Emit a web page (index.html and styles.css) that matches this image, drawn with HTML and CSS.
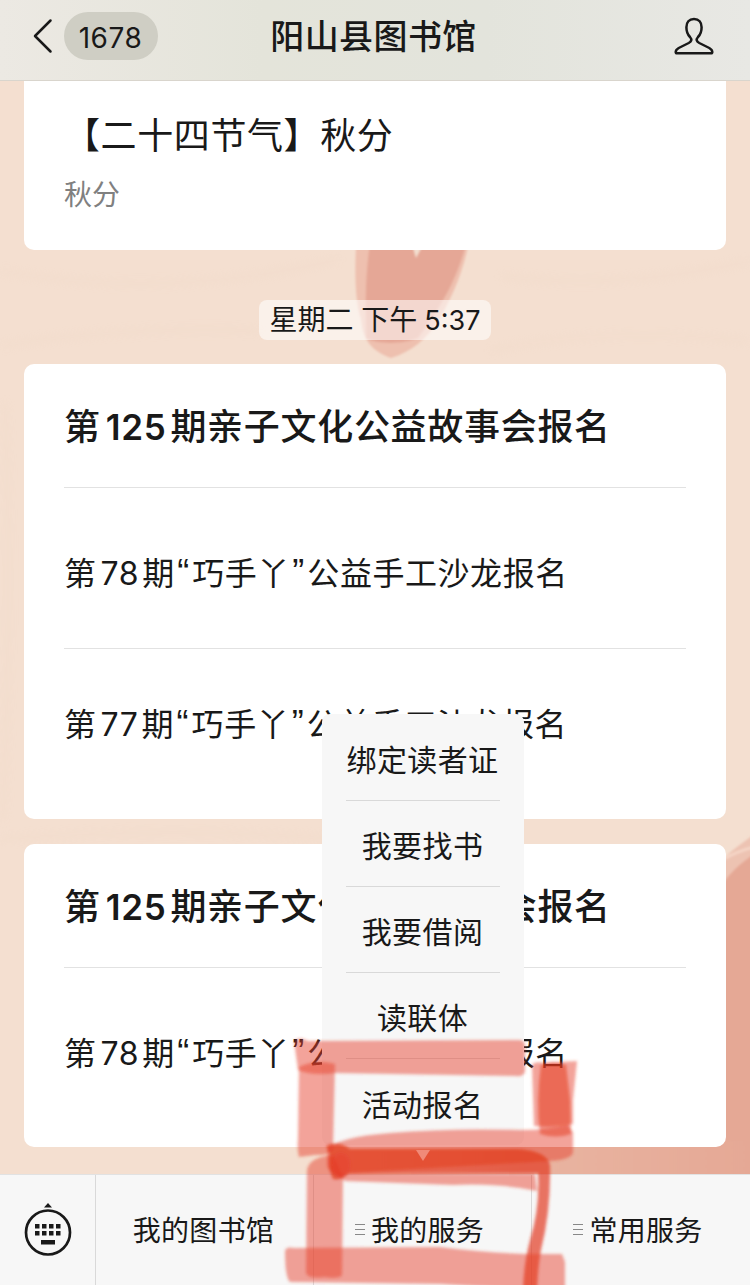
FILE: index.html
```
<!DOCTYPE html>
<html lang="zh-CN">
<head>
	<meta charset="utf-8">
	<title>阳山县图书馆</title>
	<link rel="stylesheet" href="styles.css">
</head>
<body>
	<header>
		<div class="back">
			<svg width="22" height="36" viewBox="0 0 22 36"><path d="M18.500 2.500L3 18L18.500 33.500"/></svg>
			<span class="unread">1678</span>
		</div>
		<h1>阳山县图书馆</h1>
		<svg class="profile" width="42" height="40" viewBox="0 0 42 40"><path d="M21 3c-5 0-7.600 3.700-7.600 8.200 0 4 1.100 7.300 3.600 9.800 2.200 2.500 1.500 4.500-1.300 6L5.700 32C3.200 33.500 2.700 34.500 2.700 36c0 .9.500 1.300 1.400 1.300h33.800c.9 0 1.400-.4 1.400-1.300 0-1.500-.5-2.500-3-4L26.300 27c-2.800-1.500-3.500-3.500-1.300-6 2.500-2.500 3.600-5.800 3.600-9.800C28.600 6.700 26 3 21 3z"/></svg>
	</header>
	<main>
		<svg class="wallpaper" width="750" height="1094" viewBox="0 80 750 1094">
			<defs>
				<filter id="soft"><feGaussianBlur stdDeviation="1"/></filter>
				<filter id="softer" x="-30%" width="160%"><feGaussianBlur stdDeviation="5"/></filter>
				<linearGradient id="blush">
					<stop offset="0" stop-color="#eec7b4" stop-opacity="0"/>
					<stop offset=".45" stop-color="#e9b5a2"/>
					<stop offset="1" stop-color="#e5a895"/>
				</linearGradient>
			</defs>
			<g fill="none" stroke="#ecd3c1" stroke-width="4" opacity=".3" filter="url(#softer)">
				<path d="M0 270Q170 300 340 258M0 345Q120 325 260 330M500 275Q620 290 750 260M490 350Q600 325 750 340M5 400Q12 600 3 820M0 838Q180 825 330 838"/>
			</g>
			<g filter="url(#soft)">
				<path d="M357 230C354 270 355 300 361 318C363 340 372 350 391 357C413 350 426 338 438 320C450 300 464 272 470 235Z" fill="#eec0af"/>
				<path d="M371 235C364 280 366 310 366 337C378 344 405 343 418 337C438 310 458 280 468 235Z" fill="#e5a796"/>
				<path d="M411 240h14l-9 17z" fill="#f3decf"/>
				<path d="M757 830C744 843 733 846 720 862V960H757Z" fill="#edc3b2"/>
				<path d="M757 851C742 861 730 870 718 890V1180H757Z" fill="#e5a895"/>
				<path d="M724 858Q738 850 754 846" stroke="#f5d5c6" stroke-width="3" fill="none"/>
				<path d="M320 1140H757V1180H320Z" fill="url(#blush)"/>
			</g>
		</svg>
		<article class="notice">
			<h3>【二十四节气】秋分</h3>
			<p>秋分</p>
		</article>
		<time>星期二 下午<b>5:37</b></time>
		<article>
			<h2>第<b>125</b>期亲子文化公益故事会报名</h2>
			<p class="row first">第<b>78</b>期<i>“</i>巧手丫<i>”</i>公益手工沙龙报名</p>
			<p class="row last">第<b>77</b>期<i>“</i>巧手丫<i>”</i>公益手工沙龙报名</p>
		</article>
		<article>
			<h2>第<b>125</b>期亲子文化公益故事会报名</h2>
			<p class="row">第<b>78</b>期<i>“</i>巧手丫<i>”</i>公益手工沙龙报名</p>
		</article>
	</main>
	<footer>
		<div class="keyboard">
			<svg width="50" height="56" viewBox="0 0 50 56">
				<path d="M21 5.500L25 1l4 4.500z"/>
				<circle cx="25" cy="30.500" r="22"/>
				<path d="M12 22h4.500v4.500H12zM19 22h4.500v4.500H19zM26 22h4.500v4.500H26zM33 22h4.500v4.500H33zM12 29h4.500v4.500H12zM19 29h4.500v4.500H19zM26 29h4.500v4.500H26zM33 29h4.500v4.500H33zM18 38h14v4.500H18z"/>
			</svg>
		</div>
		<nav>
			<a>我的图书馆</a>
			<a class="has-menu">我的服务</a>
			<a class="has-menu">常用服务</a>
		</nav>
	</footer>
	<ul class="menu">
		<li>绑定读者证</li>
		<li>我要找书</li>
		<li>我要借阅</li>
		<li>读联体</li>
		<li>活动报名</li>
	</ul>
	<!-- red marker -->
	<svg class="marker" width="750" height="1285" viewBox="0 0 750 1285">
		<defs>
			<filter id="ink" x="-10%" y="-10%" width="120%" height="120%"><feGaussianBlur stdDeviation="1.500"/></filter>
		</defs>
		<g filter="url(#ink)">
			<path class="light" d="M294 1041Q300 1036 308 1041L520 1040Q525 1041 525 1046V1072Q523 1077 516 1076L335 1073Q312 1076 298 1070Z"/>
			<path class="light" d="M299 1067Q316 1059 335 1064L333 1148Q331 1156 315 1155L299 1157Q297 1150 298 1138Z"/>
			<path class="light" d="M532 1065Q535 1061 544 1063L577 1061L573 1100V1124Q555 1128 534 1126Z"/>
			<path class="mid" d="M541 1065Q552 1060 566 1065L570 1100L571 1134Q556 1139 540 1134Q536 1100 541 1065Z"/>
			<path class="light" d="M327 1150Q337 1137 390 1133Q450 1128 520 1130Q550 1130 567 1125L573 1132V1153Q570 1160 548 1161L350 1173Q332 1180 327 1166Z"/>
			<path class="light" d="M307 1170Q309 1157 333 1155L343 1177L342 1275Q340 1279 324 1277Q308 1279 306 1273Z"/>
			<path class="light" d="M335 1174H535L537 1191Q500 1183 453 1185L345 1181Z"/>
			<path class="heavy" d="M326 1146Q337 1140 350 1149H518Q547 1151 550 1165Q551 1210 541 1250Q538 1266 537 1290H523Q524 1262 530 1240Q540 1208 538 1173L348 1174Q341 1181 333 1179Q327 1165 330 1154Z"/>
			<ellipse class="light" cx="341" cy="1165" rx="9" ry="12"/>
			<path class="light" d="M285 1251Q286 1246 294 1248L440 1247Q500 1255 562 1254L565 1262V1290H540L440 1284L290 1282Q285 1278 285 1251Z"/>
		</g>
		<path class="tip" d="M416 1150h14l-7 11z"/>
	</svg>
</body>
</html>
```
FILE: styles.css
```
* {
	box-sizing: border-box;
}
body {
	position: relative;
	display: flex;
	flex-direction: column;
	width: 750px;
	height: 1285px;
	margin: 0;
	overflow: hidden;
	background: #f4dfd0;
	color: #191919;
	font-family: 'Inter', 'Noto Sans CJK SC', sans-serif;
}
h1, h2, h3, p, ul {
	margin: 0;
	padding: 0;
}
h1, h2, h3, p, a, li, time {
	white-space: nowrap;
}
header {
	display: grid;
	grid-template-columns: 1fr auto 1fr;
	align-items: center;
	height: 81px;
	padding: 0 35px 8px 32px;
	border-bottom: 1px solid #d9d5cd;
	background: linear-gradient(90deg, #ece9e3, #e4e4da 35%, #e3e4dc 65%, #e8e8e4);
}
header svg {
	fill: none;
	stroke: #191919;
	stroke-width: 2.500;
	stroke-linecap: round;
	stroke-linejoin: round;
}
.back {
	display: flex;
	align-items: center;
	gap: 10px;
}
.unread {
	width: 94px;
	height: 48px;
	padding-right: 1px;
	border-radius: 24px;
	background: #cfcec4;
	font-size: 28px;
	line-height: 52px;
	letter-spacing: .5px;
	text-align: center;
}
h1 {
	padding-top: 1px;
	font-size: 34px;
	font-weight: 500;
	line-height: 50px;
	letter-spacing: .4px;
}
.profile {
	justify-self: end;
}
main {
	position: relative;
	display: flex;
	flex-direction: column;
	height: 1093px;
	padding: 0 24px;
	overflow: hidden;
}
.wallpaper {
	position: absolute;
	left: 0;
	top: 0;
}
article {
	position: relative;
	height: 303px;
	padding: 0 40px;
	border-radius: 10px;
	background: white;
}
time + article {
	height: 455px;
	margin-bottom: 25px;
}
.notice {
	height: 169px;
	border-radius: 0 0 10px 10px;
}
h3 {
	padding-top: 29px;
	font-size: 36px;
	font-weight: 400;
	line-height: 52px;
	letter-spacing: .6px;
}
.notice p {
	padding-top: 13px;
	color: #808080;
	font-size: 28px;
	line-height: 40px;
}
time {
	position: relative;
	align-self: center;
	width: 232px;
	height: 40px;
	margin: 50px 0 24px;
	border-radius: 8px;
	background: rgba(255, 255, 255, .55);
	font-size: 28px;
	line-height: 41px;
	text-align: center;
}
time b {
	margin: 0 0 0 7px;
	font-size: 27px;
}
h2 {
	height: 124px;
	border-bottom: 1px solid #e2e2e2;
	font-size: 36px;
	font-weight: 500;
	line-height: 126px;
	letter-spacing: .7px;
}
b {
	margin: 0 4px;
	font-weight: inherit;
}
h2 b {
	margin: 0 4px 0 5px;
	font-size: 35px;
	font-weight: 600;
}
.row {
	font-size: 32px;
	line-height: 172px;
	letter-spacing: .55px;
}
.row b {
	margin: 0 3px 0 4px;
}
.row i {
	display: inline-block;
	width: 17.5px;
	font-family: 'Liberation Sans', sans-serif;
	font-size: 36px;
	font-style: normal;
	line-height: 1;
	text-align: center;
}
.row.first {
	height: 161px;
	border-bottom: 1px solid #e2e2e2;
}
.row.last {
	line-height: 152px;
}
footer {
	display: flex;
	height: 111px;
	border-top: 1px solid #e2e2e2;
	background: #f7f7f7;
}
.keyboard {
	width: 97px;
	padding: 27px 0 0 23px;
	border-right: 1px solid #d9d9d9;
}
.keyboard circle {
	fill: none;
	stroke: #191919;
	stroke-width: 2.700;
}
.keyboard path {
	fill: #191919;
}
nav {
	display: grid;
	grid-template-columns: repeat(3, 218px);
}
nav a {
	display: flex;
	align-items: center;
	justify-content: center;
	padding: 0 2px 2px 0;
	border-right: 1px solid #d9d9d9;
	font-size: 28px;
	letter-spacing: .3px;
}
nav a:last-child {
	border: none;
}
.has-menu {
	padding-right: 6px;
}
.has-menu::before {
	content: "";
	width: 10px;
	height: 11px;
	margin-right: 6px;
	background: repeating-linear-gradient(#888 0 1px, transparent 1px 5px);
}
.menu {
	position: absolute;
	left: 322px;
	top: 714px;
	width: 202px;
	height: 431px;
	padding: 1px 24px 0;
	border-radius: 8px;
	background: #f7f7f7;
	list-style: none;
}
.menu li {
	display: flex;
	align-items: center;
	justify-content: center;
	height: 86px;
	padding: 1px 1px 0 0;
	font-size: 30px;
	letter-spacing: .4px;
	border-bottom: 1px solid #d9d9d9;
}
.menu li:last-child {
	border: none;
}
.marker {
	position: absolute;
	left: 0;
	top: 0;
	pointer-events: none;
}
.light {
	fill: rgba(230, 60, 40, .48);
}
.mid {
	fill: rgba(228, 50, 25, .5);
}
.heavy {
	fill: rgba(225, 52, 25, .68);
}
.tip {
	fill: #f08a78;
}
```
